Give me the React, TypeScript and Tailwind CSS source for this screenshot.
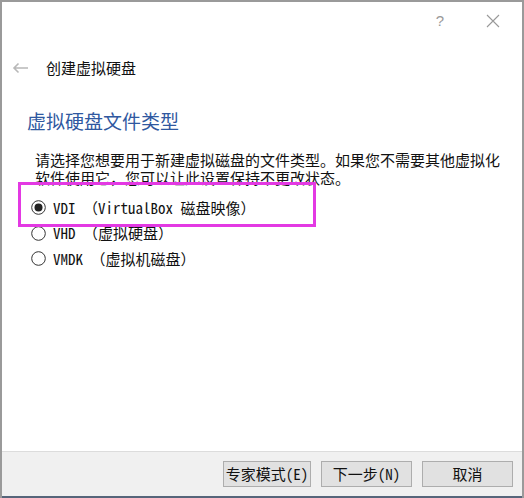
const cjk = "font-['Noto_Sans_Mono_CJK_SC','Noto_Sans_CJK_SC',sans-serif]";

function Radio({ checked }: { checked?: boolean }) {
  return (
    <svg width="15" height="15" viewBox="0 0 15 15" className="shrink-0">
      <circle cx="7.5" cy="7.5" r="6.8" fill="#fff" stroke="#333" strokeWidth="1" />
      {checked && <circle cx="7.5" cy="7.5" r="4" fill="#222" />}
    </svg>
  );
}

const options = [
  { label: "VDI （VirtualBox 磁盘映像）", checked: true },
  { label: "VHD （虚拟硬盘）" },
  { label: "VMDK （虚拟机磁盘）" },
];

export default function App() {
  return (
    <div className={`relative w-[524px] h-[498px] flex flex-col bg-white border-l-2 border-t-2 border-r-2 border-[#9a9a9a] text-[#111] ${cjk}`}>
      {/* title bar */}
      <div className="h-[52px] flex items-start pt-[9px] justify-end pr-[22px] gap-[42px] text-[#999]">
        <span className="text-[15px] leading-[20px] font-['Liberation_Sans',sans-serif]">?</span>
        <svg width="14" height="14" viewBox="0 0 14 14" stroke="#999" strokeWidth="1.1" className="mt-[3px]">
          <path d="M1 1l12 12M13 1L1 13" />
        </svg>
      </div>

      <div className="h-[28px] flex items-center pl-[10px]">
        <svg width="17" height="12" viewBox="0 0 17 12" fill="none" stroke="#b8b8b8" strokeWidth="1.6">
          <path d="M16 6H2M6.5 1.5L2 6l4.5 4.5" />
        </svg>
        <span className="ml-[17px] text-[15px] leading-[28px] font-['Noto_Sans_CJK_SC',sans-serif]">创建虚拟硬盘</span>
      </div>

      <div className="mt-[26px] pl-[25px] text-[19px] leading-[26px] text-[#2f58a0] font-['Noto_Sans_CJK_SC',sans-serif]">
        虚拟硬盘文件类型
      </div>

      <p className="mt-[17px] pl-[33px] pr-[16px] text-[15px] leading-[18px]">
        请选择您想要用于新建虚拟磁盘的文件类型。如果您不需要其他虚拟化软件使用它，您可以让此设置保持不更改状态。
      </p>

      <div className="mt-[8px] pl-[29px] flex flex-col">
        {options.map((o) => (
          <div key={o.label} className="h-[25.5px] flex items-center gap-[7px]">
            <Radio checked={o.checked} />
            <span className="text-[15px] leading-[20px]">{o.label}</span>
          </div>
        ))}
      </div>

      <div className="flex-1" />

      <div className="h-[45px] bg-[#f0f0f0] border-t border-[#dcdcdc] flex items-center justify-end gap-[10px] pr-[9px]">
        {["专家模式(E)", "下一步(N)", "取消"].map((t, i) => (
          <button
            key={t}
            className={`${i === 0 ? "w-[88px]" : "w-[91px]"} h-[26px] bg-[#e1e1e1] border border-[#adadad] text-[15px] leading-[24px] text-[#111]`}
          >
            {t}
          </button>
        ))}
      </div>
      <div className="h-[2px] bg-[#56657a]" />

      {/* annotation */}
      <div className="absolute left-[16px] top-[180px] w-[298px] h-[45px] border-[3px] border-[#e339e3] pointer-events-none" />
    </div>
  );
}
